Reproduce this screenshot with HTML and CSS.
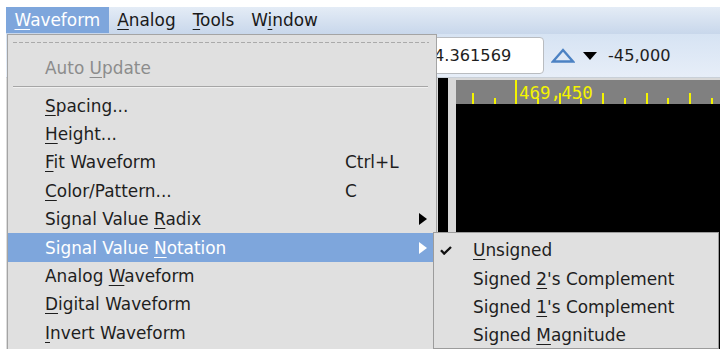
FILE: index.html
```html
<!DOCTYPE html>
<html>
<head>
<meta charset="utf-8">
<link rel="stylesheet" href="styles.css">
</head>
<body>
<div class="window">
  <div class="menubar">
    <span class="mb-item active"><u>W</u>aveform</span>
    <span class="mb-item"><u>A</u>nalog</span>
    <span class="mb-item"><u>T</u>ools</span>
    <span class="mb-item">W<u>i</u>ndow</span>
  </div>
  <div class="toolbar">
    <div class="field">4.361569</div>
    <svg class="up" width="24" height="15" viewBox="0 0 24 15"><polygon points="12,2 22,13.5 2,13.5" fill="none" stroke="#4c82c3" stroke-width="2.4" stroke-linejoin="miter"/></svg>
    <svg class="down" width="14" height="8" viewBox="0 0 14 8"><polygon points="0,0 14,0 7,8" fill="#000"/></svg>
    <span class="value">-45,000</span>
  </div>
  <div class="main">
    <div class="sidepane"></div>
    <div class="namecol"></div>
    <div class="gap"></div>
    <div class="wave">
      <div class="ruler">
        <span class="tick tall"></span>
        <span class="tick"></span>
        <span class="tick big"></span>
        <span class="tick"></span>
        <span class="tick tall"></span>
        <span class="tick"></span>
        <span class="tick tall"></span>
        <span class="tick"></span>
        <span class="tick tall"></span>
        <span class="tick"></span>
        <span class="tick tall"></span>
        <span class="tick"></span>
        <span class="ruler-label">469,450</span>
      </div>
      <div class="canvas"></div>
    </div>
  </div>

  <div class="dropdown">
    <div class="tearoff"><div class="dashes"></div></div>
    <div class="item disabled"><span>Auto <u>U</u>pdate</span></div>
    <div class="sep"></div>
    <div class="item"><span><u>S</u>pacing...</span></div>
    <div class="item"><span><u>H</u>eight...</span></div>
    <div class="item"><span><u>F</u>it Waveform</span><span>Ctrl+L</span></div>
    <div class="item"><span><u>C</u>olor/Pattern...</span><span>C</span></div>
    <div class="item"><span>Signal Value <u>R</u>adix</span><span></span><span class="arrow"></span></div>
    <div class="item hl"><span>Signal Value <u>N</u>otation</span><span></span><span class="arrow"></span></div>
    <div class="item"><span>Analog <u>W</u>aveform</span></div>
    <div class="item"><span><u>D</u>igital Waveform</span></div>
    <div class="item"><span><u>I</u>nvert Waveform</span></div>
  </div>

  <div class="submenu">
    <div class="sub-item"><svg class="check" width="12" height="9" viewBox="0 0 12 9"><path d="M1 4.2 L4.2 7.6 L11 1" fill="none" stroke="#111" stroke-width="2.3"/></svg><span><u>U</u>nsigned</span></div>
    <div class="sub-item"><span></span><span>Signed <u>2</u>'s Complement</span></div>
    <div class="sub-item"><span></span><span>Signed <u>1</u>'s Complement</span></div>
    <div class="sub-item"><span></span><span>Signed <u>M</u>agnitude</span></div>
  </div>
</div>
</body>
</html>
```

FILE: styles.css
```css
body {
  margin: 0;
  background: #ffffff;
  font-family: "DejaVu Sans", sans-serif;
  color: #1e1e1e;
}

u {
  text-decoration-thickness: 1px;
  text-underline-offset: 3px;
}

.window {
  position: relative;
  margin: 7px 6px 0;
  height: 342px;
  overflow: hidden;
  background: #dcdcdc;
}

/* menubar */
.menubar {
  display: flex;
  align-items: flex-start;
  height: 27px;
  background: linear-gradient(#e4ecf6, #c8d7eb);
  font-size: 16.9px;
}

.mb-item {
  padding: 0 8.5px;
  height: 26px;
  line-height: 26px;
  color: #1a1a1a;
}

.mb-item.active {
  background: #7ea6dc;
  color: #ffffff;
}

/* toolbar */
.toolbar {
  display: flex;
  align-items: center;
  height: 44px;
  background: linear-gradient(#d6e3f3, #e7eef8);
  border-bottom: 1px solid #c9d0d8;
  box-sizing: border-box;
}

.field {
  margin-left: 420px;
  width: 118px;
  height: 37px;
  box-sizing: border-box;
  border: 1px solid #b9bcc0;
  border-radius: 4px;
  background: #ffffff;
  padding-left: 7px;
  font-size: 16.2px;
  line-height: 35px;
  color: #1e1e1e;
}

.up {
  margin-left: 7px;
}

.down {
  margin-left: 8px;
}

.value {
  margin-left: 11px;
  font-size: 16.2px;
  color: #1e1e1e;
}

/* main area */
.main {
  display: flex;
  height: 271px;
}

.sidepane {
  flex: none;
  width: 432px;
  background: #dcdcdc;
}

.namecol {
  flex: none;
  width: 10px;
  background: #000000;
}

.gap {
  flex: none;
  width: 8px;
  background: #d8d8d8;
}

.wave {
  flex: 1;
  min-width: 0;
  overflow: hidden;
  display: flex;
  flex-direction: column;
  padding-top: 2px;
  background: #d8d8d8;
}

.ruler {
  position: relative;
  flex: none;
  height: 24px;
  background: #808080;
  display: flex;
  align-items: flex-end;
  padding-left: 16px;
  overflow: hidden;
}

.tick {
  width: 2px;
  height: 6px;
  margin-right: 19.7px;
  background: #f4f400;
  flex: none;
}

.tick.tall {
  height: 11px;
}

.tick.big {
  height: 24px;
}

.ruler-label {
  position: absolute;
  left: 63px;
  top: 2px;
  font-family: "DejaVu Sans Mono", monospace;
  font-size: 17.5px;
  line-height: 22px;
  color: #f4f400;
}

.canvas {
  flex: 1;
  background: #000000;
}

/* dropdown menu */
.dropdown {
  position: absolute;
  left: 1px;
  top: 27px;
  width: 430px;
  bottom: 0;
  box-sizing: border-box;
  background: #e0e0e0;
  border: 1px solid #a4a4a4;
  border-bottom: none;
  font-size: 16.9px;
}

.tearoff {
  height: 19px;
  padding: 7px 7px 0 5px;
  box-sizing: border-box;
}

.dashes {
  height: 1px;
  background: repeating-linear-gradient(to right, #aaaaaa 0 4px, transparent 4px 6px);
}

.sep {
  height: 9px;
  padding: 4px 8px 0 5px;
  box-sizing: border-box;
}

.sep::before {
  content: "";
  display: block;
  height: 1px;
  background: #a6a6a6;
  border-bottom: 1px solid #f0f0f0;
}

.item {
  display: grid;
  grid-template-columns: 300px 1fr 8px;
  align-items: center;
  height: 28.4px;
  padding: 0 9px 0 37px;
  color: #1e1e1e;
}

.item.disabled {
  color: #8c8c8c;
}

.item.hl {
  background: #7ea6dc;
  color: #ffffff;
}

.arrow {
  width: 0;
  height: 0;
  border-left: 8px solid #000000;
  border-top: 6px solid transparent;
  border-bottom: 6px solid transparent;
}

.item.hl .arrow {
  border-left-color: #ffffff;
}

/* submenu */
.submenu {
  position: absolute;
  left: 427px;
  top: 225px;
  width: 286px;
  height: 117px;
  box-sizing: border-box;
  background: #e0e0e0;
  border: 1px solid #9c9c9c;
  padding-top: 3px;
  font-size: 16.9px;
}

.sub-item {
  display: grid;
  grid-template-columns: 33px 1fr;
  align-items: center;
  height: 28.4px;
  padding-left: 6px;
  color: #1e1e1e;
}

.check {
  display: block;
}
```
